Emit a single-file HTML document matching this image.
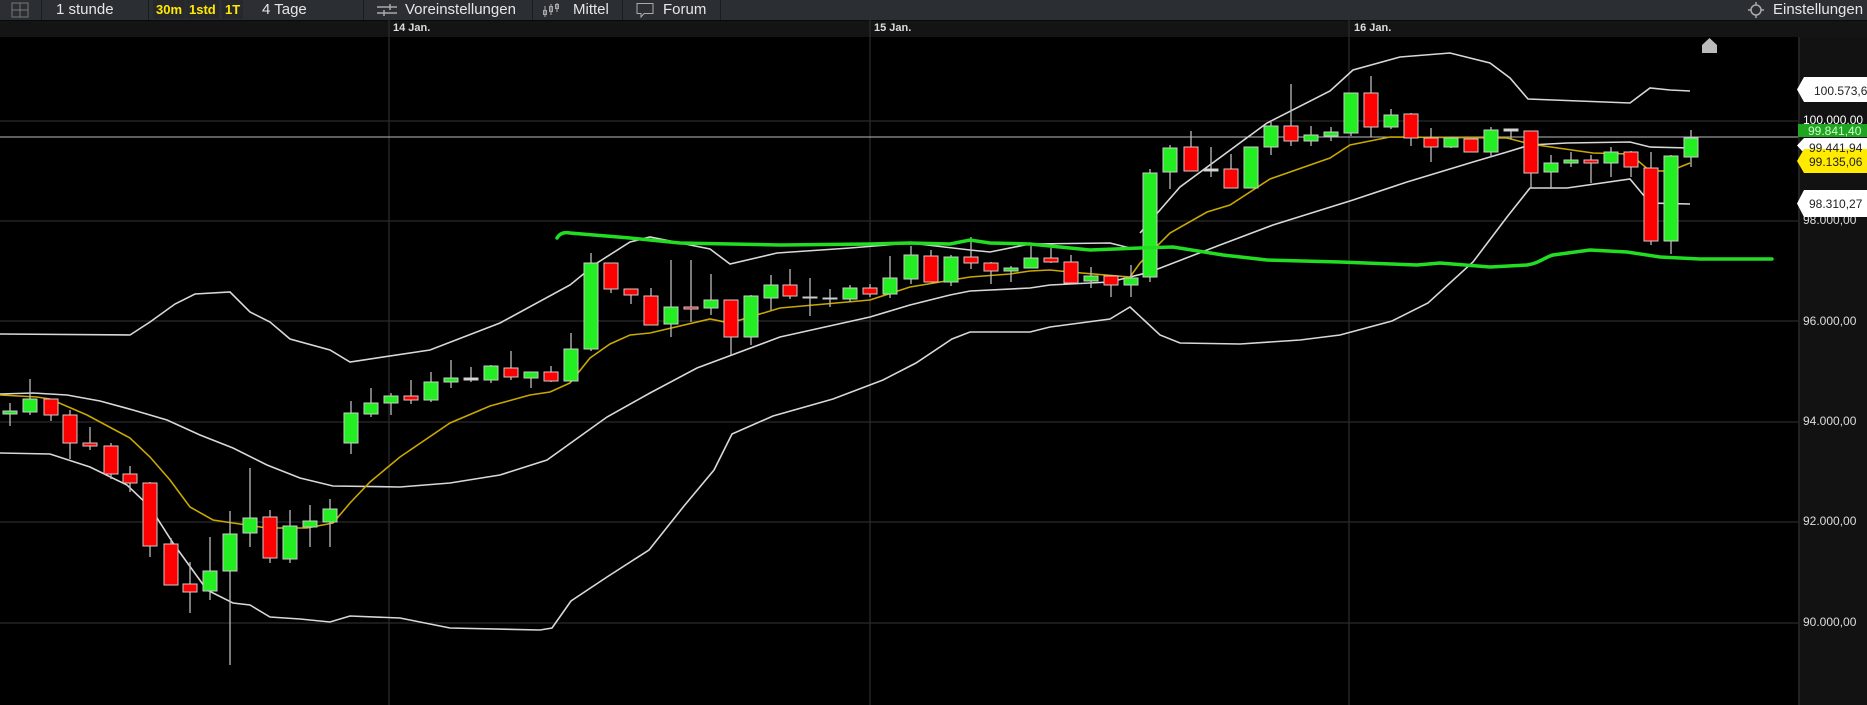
<!DOCTYPE html>
<html><head><meta charset="utf-8"><style>
*{margin:0;padding:0;box-sizing:border-box}
body{width:1867px;height:705px;background:#000;overflow:hidden;font-family:"Liberation Sans",sans-serif;position:relative}
#tb{position:absolute;left:0;top:0;width:1867px;height:20px;background:#2b2e33;color:#e6e6e6;font-size:15px}
#tb span{position:absolute;top:0;line-height:19px;white-space:nowrap}
.sep{position:absolute;top:0;width:1px;height:20px;background:#1a1c1f}
.y{color:#ffea00;font-size:13px;font-weight:bold;background:#26282c}
#db{position:absolute;left:0;top:20px;width:1867px;height:17px;background:#141414;border-top:1px solid #0a0a0a}
#db span{position:absolute;top:1px;font-size:11px;color:#ddd;font-weight:bold}
#ax{position:absolute;left:1798px;top:37px;width:69px;height:668px;background:#121212;border-left:2px solid #222}
.lbl{position:absolute;font-size:12px;color:#ddd;white-space:nowrap}
</style></head><body>
<div id="tb">
<svg style="position:absolute;left:11px;top:2px" width="18" height="16"><rect x="1" y="1" width="16" height="14" fill="none" stroke="#777"/><line x1="9" y1="1" x2="9" y2="15" stroke="#777"/><line x1="1" y1="8" x2="17" y2="8" stroke="#777"/></svg>
<div class="sep" style="left:41px"></div>
<span style="left:56px">1 stunde</span>
<div class="sep" style="left:148px"></div>
<span class="y" style="left:153px;padding:0 3px">30m</span>
<span class="y" style="left:186px;padding:0 3px">1std</span>
<span class="y" style="left:222px;padding:0 3px">1T</span>
<span style="left:262px">4 Tage</span>
<div class="sep" style="left:363px"></div>
<svg style="position:absolute;left:377px;top:3px" width="20" height="14"><g stroke="#aaa" stroke-width="1.5"><line x1="0" y1="4" x2="20" y2="4"/><line x1="0" y1="10" x2="20" y2="10"/><line x1="13" y1="1" x2="13" y2="7"/><line x1="7" y1="7" x2="7" y2="13"/></g></svg>
<span style="left:405px">Voreinstellungen</span>
<div class="sep" style="left:532px"></div>
<svg style="position:absolute;left:542px;top:2px" width="20" height="16"><g stroke="#aaa" fill="none"><line x1="3" y1="4" x2="3" y2="15"/><rect x="1.5" y="8.5" width="3" height="4"/><line x1="9" y1="2" x2="9" y2="13"/><rect x="7.5" y="4.5" width="3" height="5"/><line x1="15" y1="1" x2="15" y2="10"/><rect x="13.5" y="2.5" width="3" height="4"/></g></svg>
<span style="left:573px">Mittel</span>
<div class="sep" style="left:622px"></div>
<svg style="position:absolute;left:636px;top:2px" width="18" height="16"><path d="M1 1.5H17V11.5H8L5 15V11.5H1Z" fill="none" stroke="#aaa"/></svg>
<span style="left:663px">Forum</span>
<div class="sep" style="left:720px"></div>
<svg style="position:absolute;left:1747px;top:2px" width="18" height="16"><circle cx="9" cy="8" r="5" fill="none" stroke="#aaa" stroke-width="1.5"/><g stroke="#aaa" stroke-width="1.5"><line x1="9" y1="0" x2="9" y2="3"/><line x1="9" y1="13" x2="9" y2="16"/><line x1="1" y1="8" x2="4" y2="8"/><line x1="14" y1="8" x2="17" y2="8"/></g></svg>
<span style="left:1773px">Einstellungen</span>
</div>
<div id="db"><span style="left:393px">14 Jan.</span><span style="left:874px">15 Jan.</span><span style="left:1354px">16 Jan.</span></div>
<svg style="position:absolute;left:0;top:0" width="1798" height="705">
<g stroke="#2a2a2a" stroke-width="1.3">
<line x1="0" y1="121" x2="1798" y2="121"/><line x1="0" y1="221" x2="1798" y2="221"/><line x1="0" y1="321" x2="1798" y2="321"/><line x1="0" y1="422" x2="1798" y2="422"/><line x1="0" y1="522" x2="1798" y2="522"/><line x1="0" y1="623" x2="1798" y2="623"/>
<line x1="389" y1="20" x2="389" y2="705"/><line x1="870" y1="20" x2="870" y2="705"/><line x1="1349" y1="20" x2="1349" y2="705"/>
</g>
<line x1="0" y1="137" x2="1798" y2="137" stroke="#bbb" stroke-width="1"/>
<path d="M1702 53V45L1709.5 38L1717 45V53Z" fill="#bbb"/>
<g fill="none" stroke="#d8d8d8" stroke-width="1.6">
<path d="M0,334 L130,335 L150,322 L175,304 L195,294 L230,292 L250,312 L270,322 L290,339 L330,350 L350,362 L430,350 L500,323 L570,285 L597,263 L630,242 L650,237 L710,249 L730,264 L777,253 L850,248 L910,243 L970,250 L990,252 L1030,244 L1110,243 L1130,248"/>
<path d="M1140,233 L1180,187 L1267,123 L1330,91 L1353,70 L1400,57 L1450,53 L1490,63 L1510,78 L1528,99 L1630,103 L1650,88 L1670,90 L1690,91"/>
<path d="M0,394 L33,393 L67,395 L100,401 L133,410 L167,420 L200,435 L233,448 L267,465 L300,478 L333,486 L400,487 L450,483 L500,475 L547,460 L607,417 L650,393 L697,368 L780,337 L870,317 L910,305 L950,295 L970,291 L1030,288 L1050,285 L1110,282 L1150,272 L1220,245 L1273,225 L1353,200 L1407,182 L1473,162 L1507,152 L1530,145 L1567,143 L1630,142 L1650,147 L1690,148"/>
<path d="M0,453 L50,454 L90,467 L127,485 L150,507 L173,543 L207,590 L233,603 L250,605 L270,617 L300,619 L330,622 L350,616 L400,618 L450,628 L540,630 L552,628 L571,601 L607,577 L649,550 L684,506 L714,470 L732,434 L773,416 L833,399 L883,380 L916,363 L952,339 L970,332 L1030,332 L1050,327 L1110,319 L1130,307 L1160,335 L1180,343 L1240,344 L1300,340 L1340,335 L1392,321 L1428,303 L1473,262 L1507,217 L1530,188 L1567,188 L1630,179 L1650,203 L1690,204"/>
</g>
<path fill="none" stroke="#c8a800" stroke-width="1.6" d="M0,395 L37,397 L50,399 L87,415 L130,438 L150,457 L170,480 L190,507 L213,520 L233,523 L267,528 L307,528 L333,523 L350,503 L370,482 L400,457 L450,423 L490,406 L530,395 L550,392 L570,383 L590,358 L610,344 L630,335 L650,333 L710,319 L730,323 L780,308 L870,300 L910,287 L970,277 L1010,274 L1030,271 L1050,270 L1070,272 L1130,277 L1140,263 L1170,233 L1207,212 L1230,205 L1270,179 L1330,158 L1350,145 L1390,137 L1507,138 L1530,144 L1593,153 L1630,154 L1650,171 L1670,171 L1690,163"/>
<g stroke="#bbb" stroke-width="1.3" id="w">
<line x1="10" y1="403" x2="10" y2="426"/><line x1="30" y1="379" x2="30" y2="415"/><line x1="51" y1="399" x2="51" y2="421"/><line x1="70" y1="410" x2="70" y2="459"/><line x1="90" y1="427" x2="90" y2="450"/><line x1="111" y1="443" x2="111" y2="479"/><line x1="130" y1="466" x2="130" y2="492"/><line x1="150" y1="482" x2="150" y2="557"/><line x1="171" y1="538" x2="171" y2="585"/><line x1="190" y1="562" x2="190" y2="613"/><line x1="210" y1="537" x2="210" y2="600"/><line x1="230" y1="511" x2="230" y2="665"/><line x1="250" y1="468" x2="250" y2="547"/><line x1="270" y1="510" x2="270" y2="563"/><line x1="290" y1="510" x2="290" y2="563"/><line x1="310" y1="505" x2="310" y2="547"/><line x1="330" y1="499" x2="330" y2="547"/><line x1="351" y1="401" x2="351" y2="454"/><line x1="371" y1="388" x2="371" y2="417"/><line x1="391" y1="393" x2="391" y2="415"/><line x1="411" y1="380" x2="411" y2="404"/><line x1="431" y1="372" x2="431" y2="402"/><line x1="451" y1="360" x2="451" y2="388"/><line x1="471" y1="367" x2="471" y2="382"/><line x1="491" y1="365" x2="491" y2="383"/><line x1="511" y1="351" x2="511" y2="380"/><line x1="531" y1="372" x2="531" y2="388"/><line x1="551" y1="366" x2="551" y2="382"/><line x1="571" y1="333" x2="571" y2="382"/><line x1="591" y1="253" x2="591" y2="351"/><line x1="611" y1="263" x2="611" y2="293"/><line x1="631" y1="289" x2="631" y2="304"/><line x1="651" y1="288" x2="651" y2="325"/><line x1="671" y1="260" x2="671" y2="337"/><line x1="691" y1="260" x2="691" y2="322"/><line x1="711" y1="274" x2="711" y2="315"/><line x1="731" y1="300" x2="731" y2="355"/><line x1="751" y1="295" x2="751" y2="345"/><line x1="771" y1="275" x2="771" y2="310"/><line x1="790" y1="269" x2="790" y2="299"/><line x1="810" y1="278" x2="810" y2="316"/><line x1="830" y1="289" x2="830" y2="307"/><line x1="850" y1="285" x2="850" y2="302"/><line x1="870" y1="284" x2="870" y2="297"/><line x1="890" y1="256" x2="890" y2="298"/><line x1="911" y1="246" x2="911" y2="284"/><line x1="931" y1="250" x2="931" y2="282"/><line x1="951" y1="255" x2="951" y2="286"/><line x1="971" y1="237" x2="971" y2="269"/><line x1="991" y1="262" x2="991" y2="284"/><line x1="1011" y1="266" x2="1011" y2="282"/><line x1="1031" y1="246" x2="1031" y2="268"/><line x1="1051" y1="248" x2="1051" y2="263"/><line x1="1071" y1="255" x2="1071" y2="283"/><line x1="1091" y1="267" x2="1091" y2="288"/><line x1="1111" y1="275" x2="1111" y2="297"/><line x1="1131" y1="265" x2="1131" y2="297"/><line x1="1150" y1="169" x2="1150" y2="282"/><line x1="1170" y1="145" x2="1170" y2="189"/><line x1="1191" y1="131" x2="1191" y2="171"/><line x1="1211" y1="147" x2="1211" y2="177"/><line x1="1231" y1="154" x2="1231" y2="188"/><line x1="1251" y1="147" x2="1251" y2="188"/><line x1="1271" y1="122" x2="1271" y2="155"/><line x1="1291" y1="84" x2="1291" y2="146"/><line x1="1311" y1="126" x2="1311" y2="146"/><line x1="1331" y1="127" x2="1331" y2="141"/><line x1="1351" y1="93" x2="1351" y2="136"/><line x1="1371" y1="76" x2="1371" y2="137"/><line x1="1391" y1="109" x2="1391" y2="129"/><line x1="1411" y1="113" x2="1411" y2="146"/><line x1="1431" y1="128" x2="1431" y2="162"/><line x1="1451" y1="137" x2="1451" y2="148"/><line x1="1471" y1="139" x2="1471" y2="152"/><line x1="1491" y1="127" x2="1491" y2="157"/><line x1="1511" y1="129" x2="1511" y2="139"/><line x1="1531" y1="131" x2="1531" y2="188"/><line x1="1551" y1="155" x2="1551" y2="189"/><line x1="1571" y1="152" x2="1571" y2="167"/><line x1="1591" y1="155" x2="1591" y2="183"/><line x1="1611" y1="147" x2="1611" y2="177"/><line x1="1631" y1="151" x2="1631" y2="177"/><line x1="1651" y1="152" x2="1651" y2="245"/><line x1="1671" y1="155" x2="1671" y2="254"/><line x1="1691" y1="130" x2="1691" y2="167"/>
</g>
<g stroke="#ccc" stroke-width="1">
<g fill="#22ee22">
<rect x="3" y="411" width="14" height="3"/><rect x="23" y="399" width="14" height="13"/><rect x="203" y="571" width="14" height="20"/><rect x="223" y="534" width="14" height="37"/><rect x="243" y="518" width="14" height="15"/><rect x="283" y="526" width="14" height="33"/><rect x="303" y="521" width="14" height="6"/><rect x="323" y="509" width="14" height="13"/><rect x="344" y="413" width="14" height="30"/><rect x="364" y="403" width="14" height="11"/><rect x="384" y="396" width="14" height="7"/><rect x="424" y="382" width="14" height="18"/><rect x="444" y="378" width="14" height="4"/><rect x="484" y="366" width="14" height="14"/><rect x="524" y="372" width="14" height="6"/><rect x="564" y="349" width="14" height="32"/><rect x="584" y="263" width="14" height="86"/><rect x="664" y="307" width="14" height="17"/><rect x="704" y="300" width="14" height="8"/><rect x="744" y="296" width="14" height="41"/><rect x="764" y="285" width="14" height="13"/><rect x="843" y="288" width="14" height="11"/><rect x="883" y="278" width="14" height="16"/><rect x="904" y="255" width="14" height="24"/><rect x="944" y="257" width="14" height="25"/><rect x="1004" y="268" width="14" height="3"/><rect x="1024" y="258" width="14" height="10"/><rect x="1084" y="276" width="14" height="5"/><rect x="1124" y="278" width="14" height="7"/><rect x="1143" y="173" width="14" height="104"/><rect x="1163" y="148" width="14" height="24"/><rect x="1244" y="147" width="14" height="41"/><rect x="1264" y="126" width="14" height="21"/><rect x="1304" y="135" width="14" height="6"/><rect x="1324" y="132" width="14" height="4"/><rect x="1344" y="93" width="14" height="40"/><rect x="1384" y="115" width="14" height="12"/><rect x="1444" y="138" width="14" height="9"/><rect x="1484" y="130" width="14" height="22"/><rect x="1544" y="163" width="14" height="9"/><rect x="1564" y="160" width="14" height="3"/><rect x="1604" y="152" width="14" height="11"/><rect x="1664" y="156" width="14" height="85"/><rect x="1684" y="138" width="14" height="19"/>
</g>
<g fill="#ff0000">
<rect x="44" y="399" width="14" height="16"/><rect x="63" y="415" width="14" height="28"/><rect x="83" y="443" width="14" height="3"/><rect x="104" y="446" width="14" height="28"/><rect x="123" y="474" width="14" height="9"/><rect x="143" y="483" width="14" height="63"/><rect x="164" y="544" width="14" height="41"/><rect x="183" y="584" width="14" height="8"/><rect x="263" y="517" width="14" height="41"/><rect x="404" y="396" width="14" height="4"/><rect x="504" y="368" width="14" height="9"/><rect x="544" y="372" width="14" height="9"/><rect x="604" y="263" width="14" height="26"/><rect x="624" y="289" width="14" height="6"/><rect x="644" y="296" width="14" height="29"/><rect x="684" y="307" width="14" height="2"/><rect x="724" y="300" width="14" height="37"/><rect x="783" y="285" width="14" height="11"/><rect x="863" y="288" width="14" height="6"/><rect x="924" y="256" width="14" height="26"/><rect x="964" y="257" width="14" height="6"/><rect x="984" y="263" width="14" height="8"/><rect x="1044" y="258" width="14" height="4"/><rect x="1064" y="262" width="14" height="21"/><rect x="1104" y="276" width="14" height="9"/><rect x="1184" y="147" width="14" height="24"/><rect x="1224" y="169" width="14" height="19"/><rect x="1284" y="126" width="14" height="15"/><rect x="1364" y="93" width="14" height="34"/><rect x="1404" y="114" width="14" height="24"/><rect x="1424" y="138" width="14" height="9"/><rect x="1464" y="139" width="14" height="13"/><rect x="1524" y="131" width="14" height="42"/><rect x="1584" y="160" width="14" height="3"/><rect x="1624" y="152" width="14" height="15"/><rect x="1644" y="168" width="14" height="73"/>
</g>
<g fill="#ddd">
<rect x="464" y="378" width="14" height="2"/><rect x="803" y="297" width="14" height="1"/><rect x="823" y="298" width="14" height="1"/><rect x="1204" y="169" width="14" height="2"/><rect x="1504" y="129" width="14" height="2"/>
</g>
</g>
<path fill="none" stroke="#22dd22" stroke-width="3.5" stroke-linecap="round" d="M557,238 C560,233 565,232 570,233 L630,238 L680,243 L780,245 L870,244 L910,243 L950,244 L970,240 L990,243 L1030,244 L1090,250 L1140,248 L1173,247 L1223,255 L1267,260 L1340,262 L1417,265 L1440,263 L1490,267 L1527,265 C1540,263 1545,257 1553,255 L1590,250 L1627,252 L1660,257 L1700,259 L1772,259"/>
</svg>
<div id="ax">
<span class="lbl" style="left:3px;top:76px;color:#fff">100.000,00</span>
<span class="lbl" style="left:3px;top:176px;color:#ddd">98.000,00</span>
<span class="lbl" style="left:3px;top:277px">96.000,00</span>
<span class="lbl" style="left:3px;top:377px">94.000,00</span>
<span class="lbl" style="left:3px;top:477px">92.000,00</span>
<span class="lbl" style="left:3px;top:578px">90.000,00</span>
</div>
<svg style="position:absolute;left:1794px;top:0" width="73" height="230">
<path d="M10,77H73V102H10L3,89.5Z" fill="#fff"/>
<rect x="4" y="124" width="69" height="13" fill="#1fa51f"/>
<path d="M10,138H73V153H10L3,145.5Z" fill="#fff"/>
<path d="M10,149H73V173H10L3,161Z" fill="#ffea00"/>
<path d="M10,190H73V217H10L3,203.5Z" fill="#fff"/>
<text x="20" y="95" font-size="12" fill="#222" font-family="Liberation Sans,sans-serif">100.573,6</text>
<text x="14" y="135" font-size="12" fill="#cfc" font-family="Liberation Sans,sans-serif">99.841,40</text>
<text x="15" y="152" font-size="12" fill="#222" font-family="Liberation Sans,sans-serif">99.441,94</text>
<text x="15" y="166" font-size="12" fill="#222" font-family="Liberation Sans,sans-serif">99.135,06</text>
<text x="15" y="208" font-size="12" fill="#222" font-family="Liberation Sans,sans-serif">98.310,27</text>
</svg>
</body></html>
